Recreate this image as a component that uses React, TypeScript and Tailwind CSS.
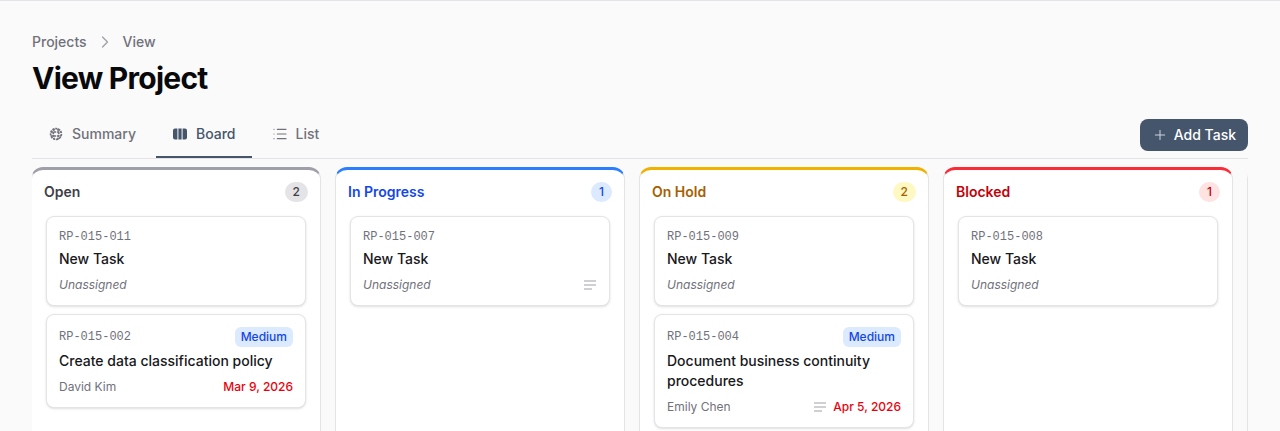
import { ChevronRight, List, Plus } from 'lucide-react';

type Task = {
  id: string;
  title: string;
  assignee?: string;
  priority?: string;
  due?: string;
  notes?: boolean;
};

type Column = {
  name: string;
  top: string;
  title: string;
  badge: string;
  tasks: Task[];
};

const columns: Column[] = [
  {
    name: 'Open',
    top: 'border-t-zinc-400',
    title: 'text-zinc-700',
    badge: 'bg-zinc-200 text-zinc-700',
    tasks: [
      { id: 'RP-015-011', title: 'New Task' },
      { id: 'RP-015-002', title: 'Create data classification policy', assignee: 'David Kim', priority: 'Medium', due: 'Mar 9, 2026' },
    ],
  },
  {
    name: 'In Progress',
    top: 'border-t-blue-500',
    title: 'text-blue-700',
    badge: 'bg-blue-100 text-blue-700',
    tasks: [{ id: 'RP-015-007', title: 'New Task', notes: true }],
  },
  {
    name: 'On Hold',
    top: 'border-t-yellow-500',
    title: 'text-yellow-700',
    badge: 'bg-yellow-100 text-yellow-700',
    tasks: [
      { id: 'RP-015-009', title: 'New Task' },
      { id: 'RP-015-004', title: 'Document business continuity procedures', assignee: 'Emily Chen', priority: 'Medium', due: 'Apr 5, 2026', notes: true },
    ],
  },
  {
    name: 'Blocked',
    top: 'border-t-red-500',
    title: 'text-red-700',
    badge: 'bg-red-100 text-red-700',
    tasks: [{ id: 'RP-015-008', title: 'New Task' }],
  },
];

function NotesIcon() {
  return (
    <svg width="14" height="14" viewBox="0 0 14 14" fill="none" stroke="#9f9fa9" strokeWidth="1.2" className="shrink-0">
      <path d="M1 3h12M1 7h12M1 11h8" />
    </svg>
  );
}

function GlobeIcon() {
  return (
    <svg width="16" height="16" viewBox="0 0 16 16" fill="none" stroke="#71717b" strokeWidth="1.7" strokeDasharray="2.2 0.8">
      <circle cx="8" cy="8" r="5.4" />
      <path d="M3 6h10M3 10h10" />
      <path d="M6.2 2.8C5 6 5 10 6.2 13.2M9.8 2.8C11 6 11 10 9.8 13.2" />
    </svg>
  );
}

function BoardIcon() {
  return (
    <svg width="16" height="16" viewBox="0 0 16 16" fill="#45556c">
      <path d="M3 2.5h2.4v11H3a2 2 0 0 1-2-2v-7a2 2 0 0 1 2-2z" />
      <rect x="6.4" y="2.5" width="3.2" height="11" />
      <path d="M10.6 2.5H13a2 2 0 0 1 2 2v7a2 2 0 0 1-2 2h-2.4z" />
    </svg>
  );
}

function TaskCard({ task }: { task: Task }) {
  return (
    <div className="mx-3.5 rounded-lg border border-zinc-200 bg-white p-3 shadow-sm">
      <div className="flex items-start justify-between">
        <span className={`font-['Liberation_Mono',monospace] text-xs text-zinc-500 ${task.priority ? 'leading-5' : 'leading-4'}`}>
          {task.id}
        </span>
        {task.priority && (
          <span className="rounded-md bg-blue-100 px-1.5 py-0.5 text-xs font-medium text-blue-700">{task.priority}</span>
        )}
      </div>
      <div className="mt-1 text-sm leading-5 font-medium text-zinc-900">{task.title}</div>
      <div className="mt-2 flex h-4 items-center justify-between text-xs">
        {task.assignee ? (
          <span className="text-zinc-500">{task.assignee}</span>
        ) : (
          <span className="text-zinc-500 italic">Unassigned</span>
        )}
        <div className="flex items-center gap-[6px]">
          {task.notes && <NotesIcon />}
          {task.due && <span className="font-medium text-red-600">{task.due}</span>}
        </div>
      </div>
    </div>
  );
}

export default function App() {
  return (
    <div className="h-[431px] overflow-hidden border-t border-zinc-200 bg-zinc-50 px-8 pt-[31px] font-['Inter',sans-serif]">
      <div className="flex items-center gap-2 text-sm font-medium text-zinc-500">
        <span>Projects</span>
        <ChevronRight className="size-5 text-zinc-400" strokeWidth={1.5} />
        <span>View</span>
      </div>
      <h1 className="mt-2 text-3xl leading-9 font-bold tracking-tight text-zinc-950">View Project</h1>

      <div className="mt-3 flex h-[51px] items-start justify-between border-b border-zinc-200">
        <div className="flex gap-1">
          <div className="flex h-[50px] items-center gap-2 px-4 pt-[2px] text-sm font-medium text-zinc-500">
            <GlobeIcon />
            <span>Summary</span>
          </div>
          <div className="flex h-[50px] items-center gap-2 border-b-2 border-slate-600 px-4 pt-1 text-sm font-medium text-slate-600">
            <BoardIcon />
            <span>Board</span>
          </div>
          <div className="flex h-[50px] items-center gap-2 px-4 pt-[2px] text-sm font-medium text-zinc-500">
            <List className="size-4" strokeWidth={1.75} />
            <span>List</span>
          </div>
        </div>
        <button className="mt-[11px] flex h-8 items-center gap-[6px] rounded-lg bg-slate-600 px-3 text-sm font-medium text-white">
          <Plus className="size-4 text-slate-300" strokeWidth={1.5} />
          Add Task
        </button>
      </div>

      <div className="mt-2 overflow-hidden">
        <div className="-ml-px flex gap-3.5">
          {columns.map((col) => (
            <div key={col.name} className={`h-[300px] w-[290px] shrink-0 rounded-t-xl border border-t-[3px] border-zinc-200 bg-white ${col.top}`}>
              <div className="mb-[2px] flex h-[44px] items-center justify-between px-3">
                <span className={`text-sm font-semibold ${col.title}`}>{col.name}</span>
                <span className={`flex h-5 items-center justify-center rounded-full px-2 text-xs font-medium ${col.badge}`}>
                  {col.tasks.length}
                </span>
              </div>
              <div className="flex flex-col gap-2">
                {col.tasks.map((task) => (
                  <TaskCard key={task.id} task={task} />
                ))}
              </div>
            </div>
          ))}
          <div className="h-[300px] w-[290px] shrink-0 rounded-t-xl border border-zinc-200 bg-white" />
        </div>
      </div>
    </div>
  );
}
